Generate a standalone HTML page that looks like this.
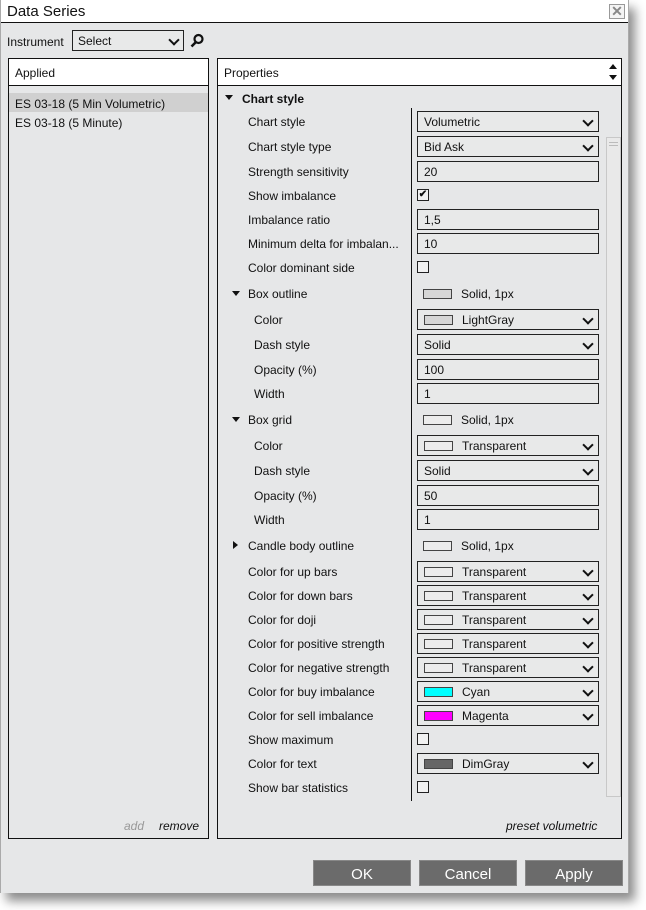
<!DOCTYPE html>
<html><head><style>
*{margin:0;padding:0;box-sizing:border-box}
body{width:646px;height:910px;background:#fff;font-family:"Liberation Sans",Arial,sans-serif;font-size:12px;color:#111;position:relative;overflow:hidden}
.a{position:absolute}
.win{left:0;top:0;width:629px;height:893px;background:#e6e7e8;border-left:1px solid #aaa;border-right:1px solid #aaa;box-shadow:6px 8px 10px rgba(0,0,0,.45)}
.l{position:absolute;left:248px;white-space:nowrap;line-height:14px;margin-top:1px}
.s{left:254px}
.f{position:absolute;left:417px;width:182px;height:21px;border:1px solid #222;background:#e8e9e9;padding-left:6px;line-height:20px;white-space:nowrap}
.dd::after{content:"";position:absolute;right:6px;top:5px;width:6px;height:6px;border-right:2px solid #111;border-bottom:2px solid #111;transform:rotate(45deg)}
.sw{display:inline-block;width:29px;height:10px;border:1px solid #444;background:#d6d6d6;vertical-align:-1px;margin-right:9px}
.t{background:#ececec}
.cb{position:absolute;left:417px;width:12px;height:12px;border:1px solid #222;background:#f2f2f2}
.tri{position:absolute;width:0;height:0;border-left:4px solid transparent;border-right:4px solid transparent;border-top:5px solid #111}
.trr{position:absolute;width:0;height:0;border-top:4px solid transparent;border-bottom:4px solid transparent;border-left:5px solid #111}
.btn{position:absolute;top:860px;height:26px;background:#6b6b6b;color:#fff;font-size:15px;text-align:center;line-height:27px;border:1px solid #888}
.pl{position:absolute;white-space:nowrap}
.sm{margin-top:1px}
</style></head><body>
<div class="a win"></div>
<div class="a" style="left:1px;top:0;width:627px;height:23px;background:#fff;border-bottom:1px solid #111"></div>
<div class="pl" style="left:7px;top:3px;font-size:15px">Data Series</div>
<div class="a" style="left:609px;top:4px;width:16px;height:15px;border:1px solid #999;background:#f4f4f4;color:#888;font-size:14px;font-weight:bold;text-align:center;line-height:13px">✕</div>

<div class="pl" style="left:7px;top:35px">Instrument</div>
<div class="a" style="left:72px;top:30px;width:112px;height:21px;border:1px solid #222;background:#e8e9e9;padding-left:5px;line-height:20px">Select</div>
<div class="a dd" style="left:172px;top:31px;width:12px;height:18px"></div>
<svg class="a" style="left:189px;top:33px" width="16" height="16" viewBox="0 0 16 16"><circle cx="9.5" cy="6" r="4" fill="none" stroke="#111" stroke-width="2.2"/><line x1="7" y1="9" x2="2.5" y2="13.5" stroke="#111" stroke-width="2.6"/></svg>

<div class="a" style="left:8px;top:58px;width:201px;height:781px;border:1px solid #111"></div>
<div class="a" style="left:9px;top:59px;width:199px;height:27px;background:#fff;border-bottom:1px solid #111"></div>
<div class="pl" style="left:15px;top:66px">Applied</div>
<div class="a" style="left:9px;top:93px;width:199px;height:19px;background:#d0d0d0"></div>
<div class="pl" style="left:15px;top:97px">ES 03-18 (5 Min Volumetric)</div>
<div class="pl" style="left:15px;top:116px">ES 03-18 (5 Minute)</div>
<div class="pl" style="left:124px;top:819px;font-style:italic;color:#999">add</div>
<div class="pl" style="left:159px;top:819px;font-style:italic">remove</div>

<div class="a" style="left:217px;top:58px;width:405px;height:781px;border:1px solid #111"></div>
<div class="a" style="left:218px;top:59px;width:403px;height:27px;background:#fff;border-bottom:1px solid #111"></div>
<div class="pl" style="left:224px;top:66px">Properties</div>
<div class="a" style="left:609px;top:64px;border-left:4px solid transparent;border-right:4px solid transparent;border-bottom:5px solid #111"></div>
<div class="a" style="left:609px;top:75px;border-left:4px solid transparent;border-right:4px solid transparent;border-top:5px solid #111"></div>
<div class="a" style="left:606px;top:137px;width:15px;height:660px;border:1px solid #c8c8c8;background:#e9e9e9"></div>
<div class="a" style="left:609px;top:142px;width:9px;height:1px;background:#bbb"></div>
<div class="a" style="left:609px;top:145px;width:9px;height:1px;background:#bbb"></div>
<div class="a" style="left:411px;top:108px;width:1px;height:693px;background:#111"></div>
<div class="pl" style="left:506px;top:819px;font-style:italic">preset volumetric</div>

<div class="tri" style="left:225px;top:95px"></div>
<div class="pl" style="left:242px;top:92px;font-weight:bold">Chart style</div>

<div class="l" style="top:114px">Chart style</div><div class="f dd" style="top:111px">Volumetric</div>
<div class="l" style="top:139px">Chart style type</div><div class="f dd" style="top:136px">Bid Ask</div>
<div class="l" style="top:164px">Strength sensitivity</div><div class="f" style="top:161px">20</div>
<div class="l" style="top:188px">Show imbalance</div><div class="cb" style="top:189px;font-size:10px;line-height:10px;text-align:center;font-weight:bold">✔</div>
<div class="l" style="top:212px">Imbalance ratio</div><div class="f" style="top:209px">1,5</div>
<div class="l" style="top:236px">Minimum delta for imbalan...</div><div class="f" style="top:233px">10</div>
<div class="l" style="top:260px">Color dominant side</div><div class="cb" style="top:261px"></div>

<div class="tri" style="left:232px;top:291px"></div>
<div class="l" style="top:286px">Box outline</div><div class="pl sm" style="left:423px;top:286px"><span class="sw"></span>Solid, 1px</div>
<div class="l s" style="top:312px">Color</div><div class="f dd" style="top:309px"><span class="sw"></span>LightGray</div>
<div class="l s" style="top:337px">Dash style</div><div class="f dd" style="top:334px">Solid</div>
<div class="l s" style="top:362px">Opacity (%)</div><div class="f" style="top:359px">100</div>
<div class="l s" style="top:386px">Width</div><div class="f" style="top:383px">1</div>

<div class="tri" style="left:232px;top:417px"></div>
<div class="l" style="top:412px">Box grid</div><div class="pl sm" style="left:423px;top:412px"><span class="sw t"></span>Solid, 1px</div>
<div class="l s" style="top:438px">Color</div><div class="f dd" style="top:435px"><span class="sw t"></span>Transparent</div>
<div class="l s" style="top:463px">Dash style</div><div class="f dd" style="top:460px">Solid</div>
<div class="l s" style="top:488px">Opacity (%)</div><div class="f" style="top:485px">50</div>
<div class="l s" style="top:512px">Width</div><div class="f" style="top:509px">1</div>

<div class="trr" style="left:233px;top:541px"></div>
<div class="l" style="top:538px">Candle body outline</div><div class="pl sm" style="left:423px;top:538px"><span class="sw t"></span>Solid, 1px</div>
<div class="l" style="top:564px">Color for up bars</div><div class="f dd" style="top:561px"><span class="sw t"></span>Transparent</div>
<div class="l" style="top:588px">Color for down bars</div><div class="f dd" style="top:585px"><span class="sw t"></span>Transparent</div>
<div class="l" style="top:612px">Color for doji</div><div class="f dd" style="top:609px"><span class="sw t"></span>Transparent</div>
<div class="l" style="top:636px">Color for positive strength</div><div class="f dd" style="top:633px"><span class="sw t"></span>Transparent</div>
<div class="l" style="top:660px">Color for negative strength</div><div class="f dd" style="top:657px"><span class="sw t"></span>Transparent</div>
<div class="l" style="top:684px">Color for buy imbalance</div><div class="f dd" style="top:681px"><span class="sw" style="background:#0ff"></span>Cyan</div>
<div class="l" style="top:708px">Color for sell imbalance</div><div class="f dd" style="top:705px"><span class="sw" style="background:#f0f"></span>Magenta</div>
<div class="l" style="top:732px">Show maximum</div><div class="cb" style="top:733px"></div>
<div class="l" style="top:756px">Color for text</div><div class="f dd" style="top:753px"><span class="sw" style="background:#666"></span>DimGray</div>
<div class="l" style="top:780px">Show bar statistics</div><div class="cb" style="top:781px"></div>

<div class="btn" style="left:313px;width:98px">OK</div>
<div class="btn" style="left:419px;width:98px">Cancel</div>
<div class="btn" style="left:525px;width:98px">Apply</div>
</body></html>
